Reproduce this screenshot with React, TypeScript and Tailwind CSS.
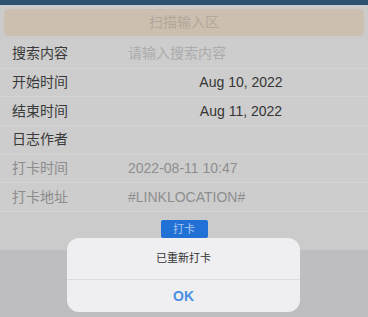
import React from "react";

const font = { fontFamily: '"Liberation Sans", "Noto Sans CJK SC", sans-serif' };

function Row({ label, value, dim, center, placeholder }: { label: string; value?: string; dim?: boolean; center?: boolean; placeholder?: boolean }) {
  return (
    <div className="flex h-[28.67px] items-center border-b border-[#d3d3d3] pl-[12px] pr-[14px]">
      <div className={`w-[116px] shrink-0 text-[14px] ${dim ? "text-[#8c8c8c]" : "text-[#3a3a3a]"}`}>{label}</div>
      <div
        className={`flex-1 text-[14px] ${center ? "text-center text-[#353535]" : ""} ${placeholder ? "text-[#ababab]" : ""} ${dim ? "text-[#8e8e8e]" : ""}`}
      >
        {value}
      </div>
    </div>
  );
}

export default function App() {
  return (
    <div className="relative h-[317px] w-[368px] overflow-hidden bg-[#bebec2]" style={font}>
      <div className="h-[5px] bg-[#2d5373]" />
      <div className="bg-[#cbcbcb] px-[4px] pt-[4px] pb-[4px]">
        <div className="flex h-[27px] items-center justify-center rounded-[4px] bg-[#cdbfb0] text-[14px] text-[#b1a79b]">
          扫描输入区
        </div>
      </div>
      <div className="bg-[#cdcdcd]">
        <Row label="搜索内容" value="请输入搜索内容" placeholder />
        <Row label="开始时间" value="Aug 10, 2022" center />
        <Row label="结束时间" value="Aug 11, 2022" center />
        <Row label="日志作者" />
        <Row label="打卡时间" value="2022-08-11 10:47" dim />
        <Row label="打卡地址" value="#LINKLOCATION#" dim />
      </div>
      <div className="flex h-[38px] justify-center bg-[#cbcbcb] pt-[8px]">
        <div className="flex h-[18px] w-[47px] items-center justify-center rounded-[2px] bg-[#2170d6] text-[11px] text-[#a9c8ef]">
          打卡
        </div>
      </div>
      <div className="absolute left-[67px] top-[238px] flex h-[74px] w-[233px] flex-col rounded-[12px] bg-[#efeff2]">
        <div className="flex h-[42px] items-center justify-center border-b border-[#dcdcdf] text-[11px] text-[#333]">
          已重新打卡
        </div>
        <div className="flex flex-1 items-center justify-center text-[14px] font-bold text-[#4a8fe2]">OK</div>
      </div>
    </div>
  );
}
